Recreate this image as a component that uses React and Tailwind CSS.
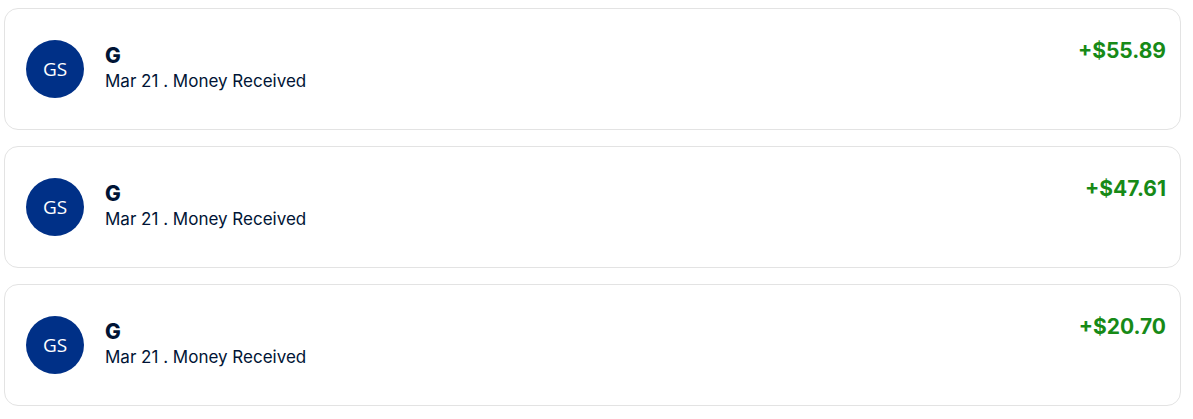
import React from 'react';

const transactions = [
  { id: 1, initials: 'GS', name: 'G', date: 'Mar 21', type: 'Money Received', amount: '+$55.89' },
  { id: 2, initials: 'GS', name: 'G', date: 'Mar 21', type: 'Money Received', amount: '+$47.61' },
  { id: 3, initials: 'GS', name: 'G', date: 'Mar 21', type: 'Money Received', amount: '+$20.70' },
];

const App = () => {
  return (
    <div className="min-h-screen w-full bg-white pt-[8px] pl-[4px] pr-[12px] font-['Inter',sans-serif]">
      <div className="flex flex-col gap-[16px]">
        {transactions.map((t) => (
          <div
            key={t.id}
            className="flex h-[122px] items-center rounded-[14px] border border-[#e3e3e3] bg-white pl-[21px] pr-[14px]"
          >
            <div className="flex h-[58px] w-[58px] shrink-0 items-center justify-center rounded-full bg-[#003087] font-['Open_Sans',sans-serif] text-[19px] font-medium text-white">
              {t.initials}
            </div>
            <div className="mb-[2px] ml-[21px] flex flex-1 flex-col">
              <span className="text-[21px] font-extrabold leading-[26px] text-[#001435]">{t.name}</span>
              <span className="text-[17px] leading-[24px] text-[#001435]">
                {t.date} . {t.type}
              </span>
            </div>
            <div className="self-start pt-[28px] text-[21px] font-bold leading-[28px] text-[#178a17]">
              {t.amount}
            </div>
          </div>
        ))}
      </div>
    </div>
  );
};

export default App;
